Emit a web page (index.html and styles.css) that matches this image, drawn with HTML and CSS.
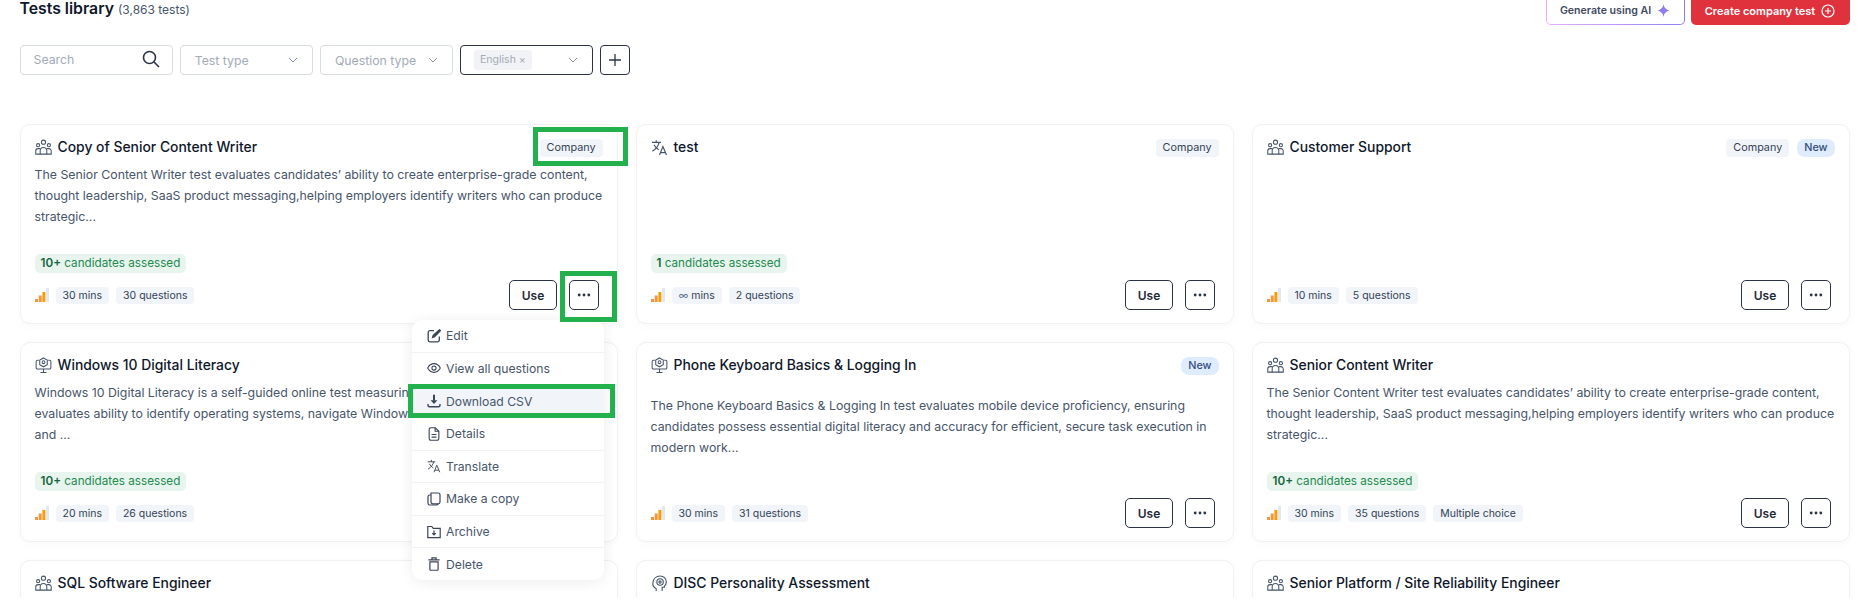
FILE: index.html
```html
<!DOCTYPE html>
<html lang="en">
<head>
    <meta charset="UTF-8">
    <meta name="viewport" content="width=device-width, initial-scale=1.0">
    <title>Tests library</title>
    <link rel="stylesheet" href="styles.css">
</head>
<body>
    <svg class="sprite" aria-hidden="true">
        <symbol id="i-group" viewBox="0 0 18 18" fill="none" stroke="currentColor" stroke-width="1.1">
            <circle cx="9" cy="3.4" r="2.2"/><circle cx="3.3" cy="6.6" r="1.7"/><circle cx="14.7" cy="6.6" r="1.7"/>
            <path d="M5.5 16v-3.6a3.5 3.5 0 0 1 7 0V16z"/>
            <path d="M5.5 10.2H3.2A2.4 2.4 0 0 0 .8 12.6V16h4.7M12.5 10.2h2.3a2.4 2.4 0 0 1 2.4 2.4V16h-4.7"/>
        </symbol>
        <symbol id="i-translate" viewBox="0 0 18 18" fill="none" stroke="currentColor" stroke-width="1.2">
            <path d="M1 3.6h9.6M5.6 1.2v2.4M8.6 3.6C7.8 7.2 5.4 10.6 1.4 13M3.2 6.2c1 2.2 2.8 4 5 5.2"/>
            <path d="M9 17l3.6-9 3.8 9M10.2 14.4h5"/>
        </symbol>
        <symbol id="i-monitor" viewBox="0 0 18 18" fill="none" stroke="currentColor" stroke-width="1.1">
            <path d="M4 3.4H2.6A1.4 1.4 0 0 0 1.200 4.800v6.400a1.400 1.400 0 0 0 1.400 1.400h12.800a1.400 1.400 0 0 0 1.400-1.400V4.800a1.400 1.400 0 0 0-1.400-1.400H14"/>
            <path d="M9 12.600v3.400M5.800 16.400h6.400"/>
            <path d="M9 1l4 2.200v5L9 10.400 5 8.200v-5z"/>
            <circle cx="9" cy="5.500" r="1.500"/>
        </symbol>
        <symbol id="i-head" viewBox="0 0 18 18" fill="none" stroke="currentColor" stroke-width="1.2">
            <path d="M5.500 17v-2.400C3 13.200 1.600 11 2 8.200 2.400 4 5.400 1 9.600 1c3.800 0 6.600 2.800 6.600 6.400 0 1.800-.8 3.400-2 4.400v1.200h-2.400V17"/>
            <circle cx="9.600" cy="7.400" r="3.400"/><circle cx="9.600" cy="7.400" r="1.200"/>
        </symbol>
        <symbol id="i-bars" viewBox="0 0 14 14">
            <rect x="0" y="11" width="3" height="3" fill="#fb923c"/>
            <rect x="3.700" y="7.500" width="3" height="6.500" fill="#fb923c"/>
            <rect x="7.400" y="4" width="3" height="10" fill="#f59e0b"/>
            <rect x="11" y="0" width="3" height="14" fill="#e2e8f0"/>
        </symbol>
        <symbol id="i-dots" viewBox="0 0 16 4"><circle cx="2.500" cy="2" r="1.600"/><circle cx="8" cy="2" r="1.600"/><circle cx="13.500" cy="2" r="1.600"/></symbol>
        <symbol id="i-chevron" viewBox="0 0 10 6" fill="none" stroke="currentColor" stroke-width="1"><path d="M1 1l4 4 4-4"/></symbol>
        <symbol id="i-edit" viewBox="0 0 14 14" fill="none" stroke="currentColor" stroke-width="1.300">
            <path d="M7 1.700H3A1.800 1.800 0 0 0 1.200 3.500v7.500A1.800 1.800 0 0 0 3 12.800h7.500a1.800 1.800 0 0 0 1.800-1.800V7.500"/>
            <path d="M12.400.8l1 1L7.600 7.700l-2 .7.600-2z" fill="currentColor"/>
        </symbol>
        <symbol id="i-eye" viewBox="0 0 16 12" fill="none" stroke="currentColor" stroke-width="1.200">
            <path d="M.8 6C2.400 2.800 5 1 8 1s5.600 1.800 7.200 5C13.600 9.200 11 11 8 11S2.400 9.200.8 6z"/><circle cx="8" cy="6" r="2.400"/>
        </symbol>
        <symbol id="i-download" viewBox="0 0 14 14" fill="none" stroke="currentColor" stroke-width="1.400">
            <path d="M1 10v1.300c0 .9.700 1.500 1.500 1.500h9c.8 0 1.500-.6 1.500-1.500V10"/>
            <path d="M7 .8v6" stroke-width="2"/><path d="M3.600 6.200h6.800L7 10z" fill="currentColor" stroke="none"/>
        </symbol>
        <symbol id="i-file" viewBox="0 0 12 15" fill="none" stroke="currentColor" stroke-width="1.200">
            <path d="M7.400.8H2.600A1.800 1.800 0 0 0 .8 2.600v9.800a1.800 1.800 0 0 0 1.800 1.800h6.800a1.800 1.800 0 0 0 1.800-1.800V4.600z"/>
            <path d="M7.200.8v3.800h4M3.400 8h5.200M3.400 10.800h5.200"/>
        </symbol>
        <symbol id="i-copy" viewBox="0 0 14 14" fill="none" stroke="currentColor" stroke-width="1.200">
            <path d="M4 1h7.200A1.800 1.800 0 0 1 13 2.800V10a1.800 1.800 0 0 1-1.800 1.800H5.800A1.800 1.800 0 0 1 4 10z"/>
            <path d="M4 3H2.800A1.800 1.800 0 0 0 1 4.800v6.400A1.800 1.800 0 0 0 2.800 13h6.400a1.800 1.800 0 0 0 1.800-1.200"/>
        </symbol>
        <symbol id="i-folder" viewBox="0 0 14 13" fill="none" stroke="currentColor" stroke-width="1.200">
            <path d="M.8 12.200V1h4l1.400 1.800h7v9.400z"/>
            <path d="M7 5v4M5.200 7.600L7 9.400l1.800-1.800"/>
        </symbol>
        <symbol id="i-trash" viewBox="0 0 12 15" fill="none" stroke="currentColor" stroke-width="1.300">
            <path d="M0 3h12M3.800 3V1h4.400v2"/><path d="M1.600 5.200h8.800v8.200a.8.800 0 0 1-.8.800H2.400a.8.800 0 0 1-.8-.8z"/>
        </symbol>
    </svg>

    <div class="page">
        <header class="page-head">
            <h1 class="page-title">Tests library <span class="page-count">(3,863 tests)</span></h1>
            <div class="head-actions">
                <button class="ai-btn">Generate using AI
                    <svg class="ai-star" viewBox="0 0 14 14"><path d="M7 0c.6 4 2.600 6.200 7 7-4.400.8-6.400 3-7 7-.6-4-2.600-6.200-7-7 4.400-.8 6.400-3 7-7z"/></svg>
                </button>
                <button class="create-btn">Create company test
                    <svg class="create-plus" viewBox="0 0 14 14" fill="none" stroke="currentColor" stroke-width="1.200"><circle cx="7" cy="7" r="6"/><path d="M7 4v6M4 7h6"/></svg>
                </button>
            </div>
        </header>

        <div class="filters">
            <div class="search">
                <span>Search</span>
                <svg class="search-icon" viewBox="0 0 18 18" fill="none" stroke="currentColor" stroke-width="1.600"><circle cx="7.500" cy="7.500" r="6"/><path d="M12 12l5 5"/></svg>
            </div>
            <div class="select"><span>Test type</span><svg class="chevron"><use href="#i-chevron"/></svg></div>
            <div class="select"><span>Question type</span><svg class="chevron"><use href="#i-chevron"/></svg></div>
            <div class="select select-active"><span class="select-chip">English ×</span><svg class="chevron"><use href="#i-chevron"/></svg></div>
            <button class="add-filter">
                <svg viewBox="0 0 14 14" fill="none" stroke="currentColor" stroke-width="1.300"><path d="M7 1v12M1 7h12"/></svg>
            </button>
        </div>

        <div class="grid">
            <article class="card">
                <div class="card-head">
                    <h2 class="card-title"><svg class="card-icon"><use href="#i-group"/></svg>Copy of Senior Content Writer</h2>
                    <div class="tags"><span class="tag">Company</span></div>
                </div>
                <p class="desc">The Senior Content Writer test evaluates candidates’ ability to create enterprise-grade content,<br>thought leadership, SaaS product messaging,helping employers identify writers who can produce<br>strategic...</p>
                <div class="card-bottom">
                    <div class="assessed"><b>10+</b> candidates assessed</div>
                    <div class="card-foot">
                        <div class="meta"><svg class="bars"><use href="#i-bars"/></svg><span class="chip">30 mins</span><span class="chip">30 questions</span></div>
                        <div class="card-actions"><button class="use-btn">Use</button><button class="more-btn"><svg><use href="#i-dots"/></svg></button></div>
                    </div>
                </div>
            </article>

            <article class="card">
                <div class="card-head">
                    <h2 class="card-title"><svg class="card-icon"><use href="#i-translate"/></svg>test</h2>
                    <div class="tags"><span class="tag">Company</span></div>
                </div>
                <div class="card-bottom">
                    <div class="assessed"><b>1</b> candidates assessed</div>
                    <div class="card-foot">
                        <div class="meta"><svg class="bars"><use href="#i-bars"/></svg><span class="chip"><span class="inf">∞</span> mins</span><span class="chip">2 questions</span></div>
                        <div class="card-actions"><button class="use-btn">Use</button><button class="more-btn"><svg><use href="#i-dots"/></svg></button></div>
                    </div>
                </div>
            </article>

            <article class="card">
                <div class="card-head">
                    <h2 class="card-title"><svg class="card-icon"><use href="#i-group"/></svg>Customer Support</h2>
                    <div class="tags"><span class="tag">Company</span><span class="tag tag-new">New</span></div>
                </div>
                <div class="card-bottom">
                    <div class="card-foot">
                        <div class="meta"><svg class="bars"><use href="#i-bars"/></svg><span class="chip">10 mins</span><span class="chip">5 questions</span></div>
                        <div class="card-actions"><button class="use-btn">Use</button><button class="more-btn"><svg><use href="#i-dots"/></svg></button></div>
                    </div>
                </div>
            </article>

            <article class="card">
                <div class="card-head">
                    <h2 class="card-title"><svg class="card-icon"><use href="#i-monitor"/></svg>Windows 10 Digital Literacy</h2>
                </div>
                <p class="desc">Windows 10 Digital Literacy is a self-guided online test measuring basic<br>evaluates ability to identify operating systems, navigate Windows settings<br>and ...</p>
                <div class="card-bottom">
                    <div class="assessed"><b>10+</b> candidates assessed</div>
                    <div class="card-foot">
                        <div class="meta"><svg class="bars"><use href="#i-bars"/></svg><span class="chip">20 mins</span><span class="chip">26 questions</span></div>
                    </div>
                </div>
            </article>

            <article class="card">
                <div class="card-head">
                    <h2 class="card-title"><svg class="card-icon"><use href="#i-monitor"/></svg>Phone Keyboard Basics &amp; Logging In</h2>
                    <div class="tags"><span class="tag tag-new">New</span></div>
                </div>
                <p class="desc desc-low">The Phone Keyboard Basics &amp; Logging In test evaluates mobile device proficiency, ensuring<br>candidates possess essential digital literacy and accuracy for efficient, secure task execution in<br>modern work...</p>
                <div class="card-bottom">
                    <div class="card-foot">
                        <div class="meta"><svg class="bars"><use href="#i-bars"/></svg><span class="chip">30 mins</span><span class="chip">31 questions</span></div>
                        <div class="card-actions"><button class="use-btn">Use</button><button class="more-btn"><svg><use href="#i-dots"/></svg></button></div>
                    </div>
                </div>
            </article>

            <article class="card">
                <div class="card-head">
                    <h2 class="card-title"><svg class="card-icon"><use href="#i-group"/></svg>Senior Content Writer</h2>
                </div>
                <p class="desc">The Senior Content Writer test evaluates candidates’ ability to create enterprise-grade content,<br>thought leadership, SaaS product messaging,helping employers identify writers who can produce<br>strategic...</p>
                <div class="card-bottom">
                    <div class="assessed"><b>10+</b> candidates assessed</div>
                    <div class="card-foot">
                        <div class="meta"><svg class="bars"><use href="#i-bars"/></svg><span class="chip">30 mins</span><span class="chip">35 questions</span><span class="chip">Multiple choice</span></div>
                        <div class="card-actions"><button class="use-btn">Use</button><button class="more-btn"><svg><use href="#i-dots"/></svg></button></div>
                    </div>
                </div>
            </article>

            <article class="card">
                <div class="card-head">
                    <h2 class="card-title"><svg class="card-icon"><use href="#i-group"/></svg>SQL Software Engineer</h2>
                </div>
            </article>

            <article class="card">
                <div class="card-head">
                    <h2 class="card-title"><svg class="card-icon"><use href="#i-head"/></svg>DISC Personality Assessment</h2>
                </div>
            </article>

            <article class="card">
                <div class="card-head">
                    <h2 class="card-title"><svg class="card-icon"><use href="#i-group"/></svg>Senior Platform / Site Reliability Engineer</h2>
                </div>
            </article>
        </div>

        <ul class="menu">
            <li class="menu-item"><svg class="menu-icon"><use href="#i-edit"/></svg>Edit</li>
            <li class="menu-item"><svg class="menu-icon"><use href="#i-eye"/></svg>View all questions</li>
            <li class="menu-item menu-item-hover"><svg class="menu-icon"><use href="#i-download"/></svg>Download CSV</li>
            <li class="menu-item"><svg class="menu-icon"><use href="#i-file"/></svg>Details</li>
            <li class="menu-item"><svg class="menu-icon"><use href="#i-translate"/></svg>Translate</li>
            <li class="menu-item"><svg class="menu-icon"><use href="#i-copy"/></svg>Make a copy</li>
            <li class="menu-item"><svg class="menu-icon"><use href="#i-folder"/></svg>Archive</li>
            <li class="menu-item"><svg class="menu-icon"><use href="#i-trash"/></svg>Delete</li>
        </ul>

        <!-- green annotation boxes drawn on top of the shot -->
        <div class="mark mark-tag"></div>
        <div class="mark mark-more"></div>
        <div class="mark mark-csv"></div>
    </div>
</body>
</html>
```

FILE: styles.css
```css
* {
    box-sizing: border-box;
}

body {
    margin: 0;
    background-color: #fff;
    font-family: Inter, "Noto Sans", sans-serif;
    color: #0f172a;
}

button {
    font-family: inherit;
    cursor: pointer;
}

.sprite {
    display: none;
}

.page {
    position: relative;
    height: 597px;
    padding: 0 19.5px;
    overflow: hidden;
}

/* header, cut off by the scroll position at the top */
.page-head {
    display: flex;
    justify-content: space-between;
    align-items: flex-end;
    height: 25px;
}

.page-title {
    align-self: flex-start;
    margin: 0;
    font-size: 15.8px;
    font-weight: 600;
    line-height: 18px;
}

.page-count {
    font-size: 12px;
    font-weight: 400;
    color: #475569;
}

.head-actions {
    display: flex;
    gap: 6px;
}

.ai-btn,
.create-btn {
    display: flex;
    align-items: center;
    justify-content: center;
    gap: 6px;
    height: 36px;
    padding: 7px 0 0;
    border-radius: 5px;
    font-size: 11px;
    font-weight: 600;
}

.ai-btn {
    width: 139px;
    border: 1.5px solid transparent;
    background: linear-gradient(#fff, #fff) padding-box, linear-gradient(90deg, #eab0f7, #8f7df5) border-box;
    font-size: 10.6px;
    color: #3f4a5f;
}

.ai-star {
    width: 13px;
    height: 13px;
    fill: #8f7df0;
}

.create-btn {
    width: 159px;
    border: none;
    background-color: #e0323c;
    color: #fff;
}

.create-plus {
    width: 14px;
    height: 14px;
}

/* filters */
.filters {
    display: flex;
    gap: 7.2px;
    height: 30px;
    margin-top: 20px;
}

.search,
.select {
    display: flex;
    align-items: center;
    justify-content: space-between;
    border: 1px solid #d8dce3;
    border-radius: 4px;
    font-size: 12.3px;
    color: #a3abb8;
}

.search {
    width: 153px;
    padding: 0 12px 2px 13px;
}

.search-icon {
    width: 18px;
    height: 18px;
    color: #2b3346;
}

.select {
    width: 133px;
    padding: 0 14px;
}

.select-active {
    padding-left: 13px;
    border-color: #2b3346;
}

.select-chip {
    padding: 3px 6px;
    border-radius: 3px;
    background-color: #f1f3f6;
    font-size: 10.5px;
    line-height: 14px;
}

.chevron {
    width: 10px;
    height: 6px;
    color: #8a93a3;
}

.add-filter {
    width: 30px;
    padding: 7px;
    border: 1px solid #2b3346;
    border-radius: 4px;
    background: none;
    color: #2b3346;
}

.add-filter svg {
    display: block;
}

/* cards */
.grid {
    display: grid;
    grid-template-columns: repeat(3, minmax(0, 1fr));
    grid-auto-rows: 200px;
    gap: 18px;
    margin-top: 48.5px;
}

.card {
    display: flex;
    flex-direction: column;
    padding: 14.5px 14px 12.5px;
    border: 1px solid #f0f1f4;
    border-radius: 10px;
    background-color: #fff;
    box-shadow: 0 2px 10px rgba(15, 23, 42, 0.03);
}

.card-head {
    display: flex;
    justify-content: space-between;
    align-items: center;
    height: 18px;
}

.card-title {
    display: flex;
    align-items: center;
    gap: 6px;
    margin: 0;
    padding-bottom: 2px;
    font-size: 13.9px;
    font-weight: 500;
    white-space: nowrap;
}

.card-icon {
    flex-shrink: 0;
    width: 17px;
    height: 17px;
    color: #475569;
}

.tags {
    display: flex;
    gap: 8px;
}

.tag {
    padding: 0 7px;
    border-radius: 4px;
    background-color: #f1f5f9;
    font-size: 10.8px;
    line-height: 18px;
    color: #334155;
}

.tag-new {
    border-radius: 8px;
    background-color: #dfecfd;
    color: #334e7b;
    font-weight: 500;
}

.desc {
    margin: 7px 0 0;
    font-size: 12.34px;
    line-height: 21px;
    color: #475569;
    white-space: nowrap;
}

.desc-low {
    margin-top: 20px;
}

.card-bottom {
    display: flex;
    flex-direction: column;
    gap: 7px;
    margin-top: auto;
}

.assessed {
    align-self: flex-start;
    padding: 0 6px;
    border-radius: 5px;
    background-color: #e8f5ee;
    font-size: 11.7px;
    line-height: 19px;
    color: #1f8a50;
}

.assessed b {
    font-weight: 600;
    color: #14653a;
}

.card-foot {
    display: flex;
    justify-content: space-between;
    align-items: center;
    height: 30px;
}

.meta {
    display: flex;
    align-items: center;
    gap: 7px;
}

.bars {
    width: 14px;
    height: 14px;
}

.chip {
    padding: 0 7px;
    border-radius: 4px;
    background-color: #f1f5f9;
    font-size: 10.5px;
    line-height: 17px;
    color: #334155;
}

.inf {
    color: #64748b;
}

.card-actions {
    display: flex;
    gap: 12px;
    margin-right: 3.5px;
}

.use-btn,
.more-btn {
    height: 30px;
    border: 1px solid #2b3346;
    border-radius: 5px;
    background-color: #fff;
    color: #1f2937;
}

.use-btn {
    width: 48px;
    padding: 0;
    font-size: 12px;
    font-weight: 600;
}

.more-btn {
    width: 30px;
    padding: 0;
}

.more-btn svg {
    display: block;
    width: 14px;
    height: 4px;
    margin: 0 auto;
    fill: #2b3346;
}

.menu {
    position: absolute;
    top: 320px;
    left: 412px;
    display: flex;
    flex-direction: column;
    width: 192px;
    height: 260px;
    margin: 0;
    padding: 0;
    list-style: none;
    border-radius: 10px;
    background-color: #fff;
    box-shadow: 0 2px 14px rgba(15, 23, 42, 0.08);
}

.menu-item {
    display: flex;
    flex: 1;
    align-items: center;
    gap: 5px;
    padding-left: 15px;
    border-bottom: 1px solid #f1f3f6;
    font-size: 12.2px;
    color: #475569;
}

.menu-item:last-child {
    border-bottom: none;
}

.menu-item-hover {
    background-color: #f1f5f9;
}

.menu-icon {
    flex-shrink: 0;
    width: 14px;
    height: 14px;
    color: #3b4557;
}

/* annotations */
.mark {
    position: absolute;
    border: 5px solid #22b14c;
}

.mark-tag {
    top: 127px;
    left: 533px;
    width: 95px;
    height: 39px;
}

.mark-more {
    top: 271px;
    left: 560px;
    width: 57px;
    height: 51px;
}

.mark-csv {
    top: 384px;
    left: 408px;
    width: 207px;
    height: 34px;
}
```
